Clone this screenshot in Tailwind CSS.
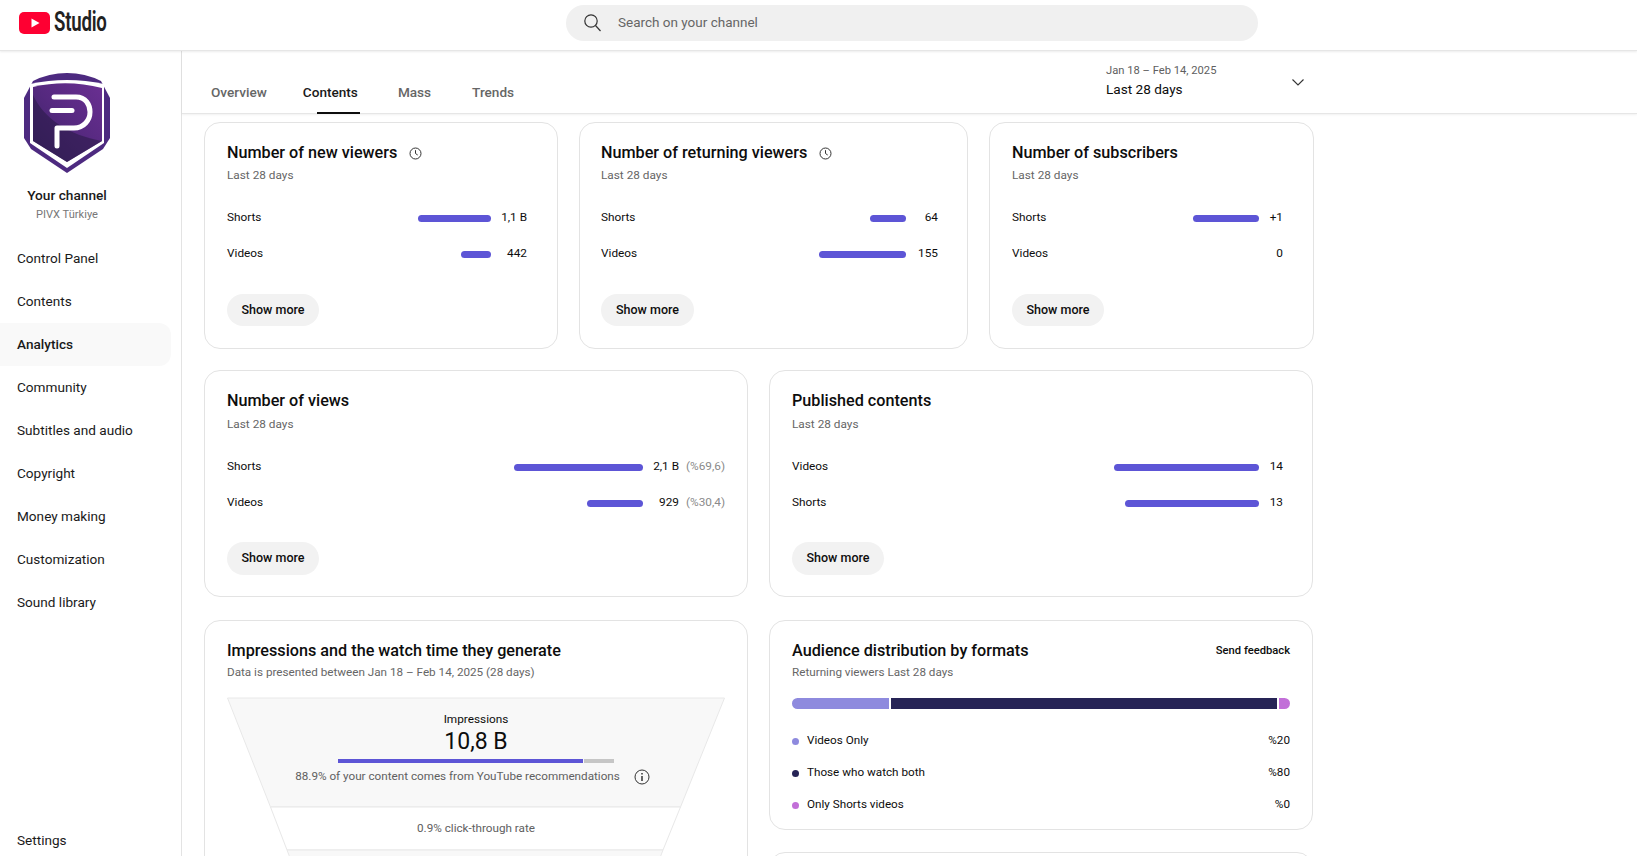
<!DOCTYPE html>
<html lang="en">
<head>
<meta charset="utf-8">
<title>YouTube Studio</title>
<script src="https://cdn.jsdelivr.net/npm/@tailwindcss/browser@4"></script>
</head>
<body class="h-[856px] w-[1637px] overflow-hidden bg-white font-[Roboto,sans-serif] text-[#0d0d0d]">
<header class="relative z-10 flex h-[51px] items-center border-b border-[#e6e6e6] pb-[5px] shadow-[0_1px_2px_rgba(0,0,0,0.08)]">
  <div class="flex w-[566px] items-center pl-[19px]">
    <svg width="31" height="22" viewBox="0 0 31 22"><rect width="31" height="22" rx="5" fill="#fe0032"/><path d="M12.5 6.5v9l8-4.5z" fill="#fff"/></svg>
    <span class="ml-[4px] origin-left scale-x-[0.69] text-[27px] leading-none font-semibold tracking-[-0.3px] text-[#222]">Studio</span>
  </div>
  <div class="flex h-9 w-[692px] items-center rounded-full bg-[#f0f0f0] pl-[17px]">
    <svg width="19" height="19" viewBox="0 0 19 19" fill="none" stroke="#333" stroke-width="1.2"><circle cx="8" cy="8" r="6.2"/><path d="M12.5 12.5l5 5.5"/></svg>
    <span class="ml-[16px] text-[13.5px] text-[#666]">Search on your channel</span>
  </div>
</header>
<div class="flex h-[805px]">
  <aside class="flex w-[182px] shrink-0 flex-col border-r border-[#e3e3e3] pt-[22px]">
    <svg class="ml-[24px]" width="87" height="101" viewBox="0 0 87 101">
      <defs><linearGradient id="g" x1="0" y1="1" x2="1" y2="0"><stop offset="0" stop-color="#3a2365"/><stop offset="0.5" stop-color="#55297f"/><stop offset="1" stop-color="#6a2f92"/></linearGradient></defs>
      <path d="M43 0Q25 0 9 8L0 25V65L7 76 43 100 79 76 86 65V25L77 8Q61 0 43 0Z" fill="#4d2a80"/>
      <path d="M6 11Q43 3 80 11V70L43 95 6 70Z" fill="#fff"/>
      <path d="M9 14Q43 6 78 15V68L43 89 9 68Z" fill="url(#g)"/>
      <path d="M9 22C20 46 45 62 78 68L43 89 9 68Z" fill="#2b1a4a" opacity="0.6"/>
      <path d="M30 24H52C62 24 66 32 66 39 66 47 60 55 50 55H33V73" fill="none" stroke="#fff" stroke-width="5" stroke-linecap="round" stroke-linejoin="round"/>
      <path d="M28 37.500H48" stroke="#fff" stroke-width="5" stroke-linecap="round"/>
    </svg>
    <div class="mt-[11px] w-[134px] text-center text-[13.7px] leading-[20px] font-medium text-[#1a1a1a]">Your channel</div>
    <div class="mt-[2px] w-[134px] text-center text-[11.1px] leading-[16px] text-[#777]">PIVX Türkiye</div>
    <nav class="mt-[14px] flex flex-col text-[13.6px] text-[#1a1a1a]">
      <a class="flex h-[43px] items-center pl-[17px]">Control Panel</a>
      <a class="flex h-[43px] items-center pl-[17px]">Contents</a>
      <a class="flex h-[43px] w-[171px] items-center rounded-r-xl bg-[#f9f9f9] pl-[17px] font-medium">Analytics</a>
      <a class="flex h-[43px] items-center pl-[17px]">Community</a>
      <a class="flex h-[43px] items-center pl-[17px]">Subtitles and audio</a>
      <a class="flex h-[43px] items-center pl-[17px]">Copyright</a>
      <a class="flex h-[43px] items-center pl-[17px]">Money making</a>
      <a class="flex h-[43px] items-center pl-[17px]">Customization</a>
      <a class="flex h-[43px] items-center pl-[17px]">Sound library</a>
    </nav>
    <a class="mt-auto flex h-[32px] items-center pl-[17px] text-[13.6px] text-[#1a1a1a]">Settings</a>
  </aside>
  <main class="min-w-0 flex-1">
    <div class="relative flex h-[63px] border-b border-[#e6e6e6] shadow-[0_1px_2px_rgba(0,0,0,0.06)]">
      <div class="flex w-[924px] items-end pb-[12px] pl-[29px] text-[13.6px] leading-[18px] font-medium text-[#666]">
        <span>Overview</span>
        <span class="relative ml-[36px] text-[#1a1a1a]">Contents<span class="absolute top-[29px] left-[14px] h-[2px] w-[43px] bg-[#0d0d0d]"></span></span>
        <span class="ml-[40px]">Mass</span>
        <span class="ml-[41px]">Trends</span>
      </div>
      <div class="flex flex-col pt-[12px]">
        <span class="text-[11.2px] leading-[16px] text-[#606060]">Jan 18 – Feb 14, 2025</span>
        <span class="mt-[1px] text-[13.6px] leading-[18px] text-[#0d0d0d]">Last 28 days</span>
      </div>
      <svg class="mt-[27px] ml-[75px]" width="14" height="9" viewBox="0 0 14 9" fill="none" stroke="#333" stroke-width="1.1"><path d="M1.5 1.5L7 7l5.500-5.500"/></svg>
    </div>
    <div class="flex w-[1132px] flex-col pt-[8px] pl-[22px]">
      <!-- Row 1 -->
      <div class="flex h-[227px] w-[1110px] gap-[21px]">
        <section class="h-full w-[354px] rounded-[16px] border border-[#e3e3e3] pt-[19px] pr-[30px] pl-[22px]">
          <div class="flex h-[22px] items-center text-[16.2px] font-medium">Number of new viewers
            <svg class="ml-[12px]" width="13" height="13" viewBox="0 0 13 13" fill="none" stroke="#333" stroke-width="1"><circle cx="6.500" cy="6.500" r="5.500"/><path d="M6.500 3.200v3.300l2.200 1.500"/></svg></div>
          <div class="mt-[1.5px] text-[11.8px] leading-[18px] text-[#666]">Last 28 days</div>
          <div class="mt-[16.5px] flex h-[36px] items-center text-[11.8px]"><span>Shorts</span><span class="ml-auto h-[7px] w-[73px] rounded-full bg-[#5d55d6]"></span><span class="w-[36px] text-right">1,1 B</span></div>
          <div class="flex h-[36px] items-center text-[11.8px]"><span>Videos</span><span class="ml-auto h-[7px] w-[30px] rounded-full bg-[#5d55d6]"></span><span class="w-[36px] text-right">442</span></div>
          <button class="mt-[22px] h-[32px] w-[92px] rounded-full bg-[#f2f2f2] text-[12.5px] font-medium">Show more</button>
        </section>
        <section class="h-full w-[389px] rounded-[16px] border border-[#e3e3e3] pt-[19px] pr-[29px] pl-[21px]">
          <div class="flex h-[22px] items-center text-[16.2px] font-medium">Number of returning viewers
            <svg class="ml-[12px]" width="13" height="13" viewBox="0 0 13 13" fill="none" stroke="#333" stroke-width="1"><circle cx="6.500" cy="6.500" r="5.500"/><path d="M6.500 3.200v3.300l2.200 1.500"/></svg></div>
          <div class="mt-[1.5px] text-[11.8px] leading-[18px] text-[#666]">Last 28 days</div>
          <div class="mt-[16.5px] flex h-[36px] items-center text-[11.8px]"><span>Shorts</span><span class="ml-auto h-[7px] w-[36px] rounded-full bg-[#5d55d6]"></span><span class="w-[32px] text-right">64</span></div>
          <div class="flex h-[36px] items-center text-[11.8px]"><span>Videos</span><span class="ml-auto h-[7px] w-[87px] rounded-full bg-[#5d55d6]"></span><span class="w-[32px] text-right">155</span></div>
          <button class="mt-[22px] h-[32px] w-[93px] rounded-full bg-[#f2f2f2] text-[12.5px] font-medium">Show more</button>
        </section>
        <section class="h-full w-[325px] rounded-[16px] border border-[#e3e3e3] pt-[19px] pr-[30px] pl-[22px]">
          <div class="flex h-[22px] items-center text-[16.2px] font-medium">Number of subscribers</div>
          <div class="mt-[1.5px] text-[11.8px] leading-[18px] text-[#666]">Last 28 days</div>
          <div class="mt-[16.5px] flex h-[36px] items-center text-[11.8px]"><span>Shorts</span><span class="ml-auto h-[7px] w-[66px] rounded-full bg-[#5d55d6]"></span><span class="w-[24px] text-right">+1</span></div>
          <div class="flex h-[36px] items-center justify-between text-[11.8px]"><span>Videos</span><span>0</span></div>
          <button class="mt-[22px] h-[32px] w-[92px] rounded-full bg-[#f2f2f2] text-[12.5px] font-medium">Show more</button>
        </section>
      </div>
      <!-- Row 2 -->
      <div class="mt-[21px] flex h-[227px] w-[1110px] gap-[21px]">
        <section class="h-full w-[544px] rounded-[16px] border border-[#e3e3e3] pt-[19.5px] pr-[22px] pl-[22px]">
          <div class="flex h-[22px] items-center text-[16.2px] font-medium">Number of views</div>
          <div class="mt-[2.500px] text-[11.8px] leading-[18px] text-[#666]">Last 28 days</div>
          <div class="mt-[16px] flex h-[36px] items-center text-[11.8px]"><span>Shorts</span><span class="ml-auto h-[7px] w-[129px] rounded-full bg-[#5d55d6]"></span><span class="w-[36px] text-right">2,1 B</span><span class="w-[46px] text-right text-[#8a8a8a]">(%69,6)</span></div>
          <div class="flex h-[36px] items-center text-[11.8px]"><span>Videos</span><span class="ml-auto h-[7px] w-[56px] rounded-full bg-[#5d55d6]"></span><span class="w-[36px] text-right">929</span><span class="w-[46px] text-right text-[#8a8a8a]">(%30,4)</span></div>
          <button class="mt-[21px] h-[33px] w-[92px] rounded-full bg-[#f2f2f2] text-[12.5px] font-medium">Show more</button>
        </section>
        <section class="h-full w-[544px] rounded-[16px] border border-[#e3e3e3] pt-[19.5px] pr-[29px] pl-[22px]">
          <div class="flex h-[22px] items-center text-[16.2px] font-medium">Published contents</div>
          <div class="mt-[2.500px] text-[11.8px] leading-[18px] text-[#666]">Last 28 days</div>
          <div class="mt-[16px] flex h-[36px] items-center text-[11.8px]"><span>Videos</span><span class="ml-auto h-[7px] w-[145px] rounded-full bg-[#5d55d6]"></span><span class="w-[24px] text-right">14</span></div>
          <div class="flex h-[36px] items-center text-[11.8px]"><span>Shorts</span><span class="ml-auto h-[7px] w-[134px] rounded-full bg-[#5d55d6]"></span><span class="w-[24px] text-right">13</span></div>
          <button class="mt-[21px] h-[33px] w-[92px] rounded-full bg-[#f2f2f2] text-[12.5px] font-medium">Show more</button>
        </section>
      </div>
      <!-- Row 3 -->
      <div class="mt-[23px] flex w-[1110px] items-start gap-[21px]">
        <section class="h-[400px] w-[544px] rounded-[16px] border border-[#e3e3e3] pt-[19px] pr-[22px] pl-[22px]">
          <div class="flex h-[22px] items-center text-[16.2px] font-medium">Impressions and the watch time they generate</div>
          <div class="mt-[1px] text-[11.7px] leading-[18px] text-[#666]">Data is presented between Jan 18 – Feb 14, 2025 (28 days)</div>
          <div class="relative mt-[16px] h-[200px] w-[498px]">
            <svg class="absolute inset-0" width="498" height="200" viewBox="0 0 498 200" fill="none">
              <path d="M0.500 1H497.500L453.500 110H43.500Z" fill="#f8f8f8" stroke="#e8e8e8"/>
              <path d="M43.500 110H453.500L436 153H60Z" fill="#fff" stroke="#e8e8e8"/>
              <path d="M60 153H436L418 200H78Z" fill="#f8f8f8" stroke="#e8e8e8"/>
            </svg>
            <div class="relative flex flex-col items-center pt-[14px]">
              <div class="text-[11.8px] leading-[16px]">Impressions</div>
              <div class="mt-[1px] text-[23px] leading-[28px]">10,8 B</div>
              <div class="mt-[3px] flex h-[4px] w-[276px] gap-[1px]"><span class="w-[245px] bg-[#5d55d6]"></span><span class="flex-1 bg-[#c6c6c6]"></span></div>
              <div class="mt-[5px] mr-[7px] flex h-[18px] items-center text-[11.7px] text-[#606060]"><span>88.9% of your content comes from YouTube recommendations</span>
                <svg class="ml-[14px]" width="16" height="16" viewBox="0 0 16 16" fill="none" stroke="#333" stroke-width="1"><circle cx="8" cy="8" r="7"/><path d="M8 7v5M8 4v1.500" stroke-width="1.500"/></svg></div>
              <div class="mt-[34px] text-[11.7px] leading-[16px] text-[#606060]">0.9% click-through rate</div>
            </div>
          </div>
        </section>
        <div class="flex w-[544px] flex-col gap-[22px]">
          <section class="h-[210px] rounded-[16px] border border-[#e3e3e3] pt-[19px] pr-[22px] pl-[22px]">
            <div class="flex h-[22px] items-center justify-between"><span class="text-[16.2px] font-medium">Audience distribution by formats</span><span class="text-[11.2px] font-medium">Send feedback</span></div>
            <div class="mt-[1px] text-[11.7px] leading-[18px] text-[#666]">Returning viewers Last 28 days</div>
            <div class="mt-[17px] flex h-[11px] w-[498px] gap-[2px] overflow-hidden rounded-full"><span class="w-[97px] bg-[#8e8ade]"></span><span class="w-[386px] bg-[#262456]"></span><span class="flex-1 bg-[#c26fd8]"></span></div>
            <div class="mt-[16px] flex h-[32px] items-center text-[11.7px]"><span class="mr-[8px] size-[7px] rounded-full bg-[#8e8ade]"></span><span>Videos Only</span><span class="ml-auto">%20</span></div>
            <div class="flex h-[32px] items-center text-[11.7px]"><span class="mr-[8px] size-[7px] rounded-full bg-[#262456]"></span><span>Those who watch both</span><span class="ml-auto">%80</span></div>
            <div class="flex h-[32px] items-center text-[11.7px]"><span class="mr-[8px] size-[7px] rounded-full bg-[#c26fd8]"></span><span>Only Shorts videos</span><span class="ml-auto">%0</span></div>
          </section>
          <section class="h-[100px] rounded-[16px] border border-[#e3e3e3]"></section>
        </div>
      </div>
    </div>
  </main>
</div>
</body>
</html>
